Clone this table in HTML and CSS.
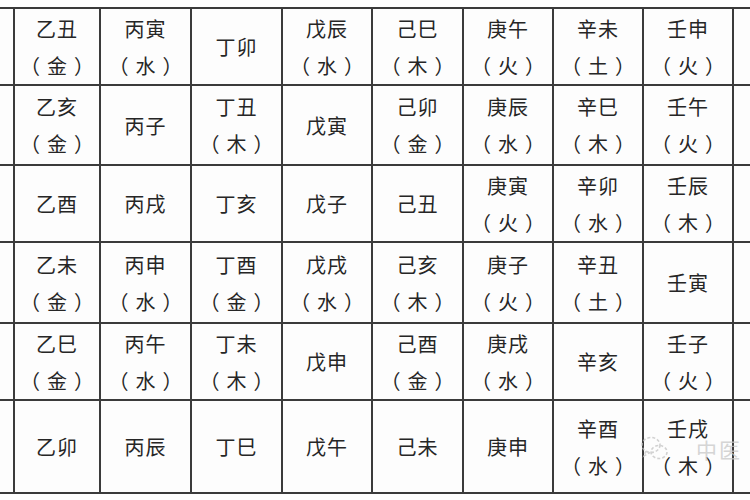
FILE: index.html
```html
<!DOCTYPE html>
<html lang="zh-CN">
<head>
<meta charset="utf-8">
<title>纳音表</title>
<link rel="stylesheet" href="styles.css">
</head>
<body>
<div class="sheet">
  <div class="grid">
    <div class="c"></div>
    <div class="c"><span>乙丑</span><span class="p">（金）</span></div>
    <div class="c"><span>丙寅</span><span class="p">（水）</span></div>
    <div class="c"><span>丁卯</span></div>
    <div class="c"><span>戊辰</span><span class="p">（水）</span></div>
    <div class="c"><span>己巳</span><span class="p">（木）</span></div>
    <div class="c"><span>庚午</span><span class="p">（火）</span></div>
    <div class="c"><span>辛未</span><span class="p">（土）</span></div>
    <div class="c"><span>壬申</span><span class="p">（火）</span></div>
    <div class="c"></div>

    <div class="c"></div>
    <div class="c"><span>乙亥</span><span class="p">（金）</span></div>
    <div class="c"><span>丙子</span></div>
    <div class="c"><span>丁丑</span><span class="p">（木）</span></div>
    <div class="c"><span>戊寅</span></div>
    <div class="c"><span>己卯</span><span class="p">（金）</span></div>
    <div class="c"><span>庚辰</span><span class="p">（水）</span></div>
    <div class="c"><span>辛巳</span><span class="p">（木）</span></div>
    <div class="c"><span>壬午</span><span class="p">（火）</span></div>
    <div class="c"></div>

    <div class="c"></div>
    <div class="c"><span>乙酉</span></div>
    <div class="c"><span>丙戌</span></div>
    <div class="c"><span>丁亥</span></div>
    <div class="c"><span>戊子</span></div>
    <div class="c"><span>己丑</span></div>
    <div class="c"><span>庚寅</span><span class="p">（火）</span></div>
    <div class="c"><span>辛卯</span><span class="p">（水）</span></div>
    <div class="c"><span>壬辰</span><span class="p">（木）</span></div>
    <div class="c"></div>

    <div class="c"></div>
    <div class="c"><span>乙未</span><span class="p">（金）</span></div>
    <div class="c"><span>丙申</span><span class="p">（水）</span></div>
    <div class="c"><span>丁酉</span><span class="p">（金）</span></div>
    <div class="c"><span>戊戌</span><span class="p">（水）</span></div>
    <div class="c"><span>己亥</span><span class="p">（木）</span></div>
    <div class="c"><span>庚子</span><span class="p">（火）</span></div>
    <div class="c"><span>辛丑</span><span class="p">（土）</span></div>
    <div class="c"><span>壬寅</span></div>
    <div class="c"></div>

    <div class="c"></div>
    <div class="c"><span>乙巳</span><span class="p">（金）</span></div>
    <div class="c"><span>丙午</span><span class="p">（水）</span></div>
    <div class="c"><span>丁未</span><span class="p">（木）</span></div>
    <div class="c"><span>戊申</span></div>
    <div class="c"><span>己酉</span><span class="p">（金）</span></div>
    <div class="c"><span>庚戌</span><span class="p">（水）</span></div>
    <div class="c"><span>辛亥</span></div>
    <div class="c"><span>壬子</span><span class="p">（火）</span></div>
    <div class="c"></div>

    <div class="c"></div>
    <div class="c"><span>乙卯</span></div>
    <div class="c"><span>丙辰</span></div>
    <div class="c"><span>丁巳</span></div>
    <div class="c"><span>戊午</span></div>
    <div class="c"><span>己未</span></div>
    <div class="c"><span>庚申</span></div>
    <div class="c"><span>辛酉</span><span class="p">（水）</span></div>
    <div class="c"><span>壬戌</span><span class="p">（木）</span></div>
    <div class="c"></div>
  </div>
  <div class="watermark">
    <svg class="wm-icon" width="30" height="30" viewBox="0 0 30 30" fill="none" stroke="#c4c4c4" stroke-width="1.6" stroke-dasharray="3 2">
      <ellipse cx="11" cy="11" rx="9" ry="7.5"/>
      <ellipse cx="19" cy="18" rx="8" ry="6.5"/>
      <path d="M6 17 L4 22 L10 18.5"/>
    </svg>
    <span class="wm-text">中医</span>
  </div>
</div>
</body>
</html>
```

FILE: styles.css
```css
html, body {
  margin: 0;
  padding: 0;
  background: #ffffff;
}

body {
  width: 750px;
  height: 500px;
  overflow: hidden;
  font-family: "Noto Sans CJK SC", "Noto Sans CJK TC", sans-serif;
  color: #262626;
}

.sheet {
  position: relative;
  padding-top: 7px;
}

.grid {
  display: grid;
  grid-template-columns: 13px 84px 89px 89px 88px 89px 88px 88px 88px 16px;
  grid-template-rows: 75px 78px 75px 79px 75px 91px;
  gap: 2px;
  padding: 2px 0;
  background: #3b3b3b;
  width: 750px;
}

.c {
  background: #fdfdfd;
  display: flex;
  flex-direction: column;
  align-items: center;
  justify-content: center;
  font-size: 20px;
  line-height: 37px;
  letter-spacing: 1px;
}

.c span {
  display: block;
  white-space: nowrap;
}

.c .p {
  letter-spacing: 7px;
  padding-left: 7px;
}

.watermark {
  position: absolute;
  left: 640px;
  top: 434px;
  display: flex;
  align-items: center;
  gap: 26px;
  opacity: 0.75;
  pointer-events: none;
}

.wm-icon {
  display: block;
}

.wm-text {
  font-size: 21px;
  color: #c8c8c8;
  letter-spacing: 2px;
}
```
